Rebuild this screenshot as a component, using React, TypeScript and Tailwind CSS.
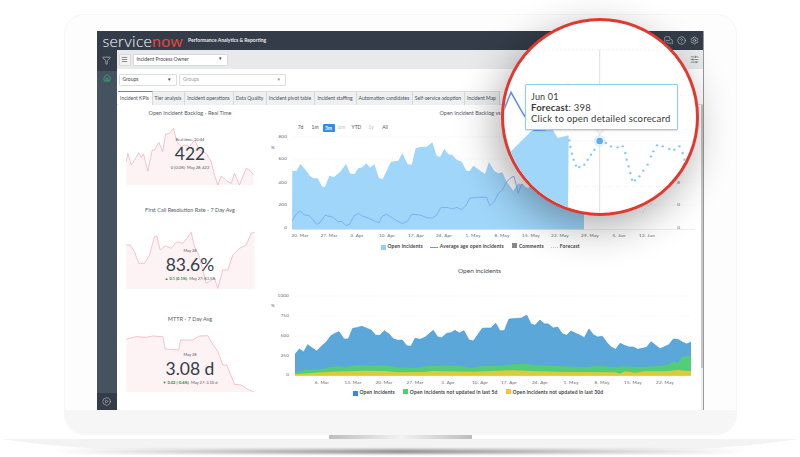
import { CirclePlay, CircleHelp, Home, MessagesSquare, Settings, SlidersHorizontal, Menu, Filter } from "lucide-react";

type Pt = [number, number];
const pts = (a: Pt[], ox: number, oy: number) => a.map(([x, y]) => `${(x / 3 + ox).toFixed(1)},${(y / 3 + oy).toFixed(1)}`);

const area1: Pt[] = [[82,183],[95,182],[106,162],[118,175],[135,198],[145,205],[158,205],[172,230],[180,231],[193,197],[207,201],[225,186],[243,162],[256,191],[268,192],[280,175],[292,172],[304,160],[316,173],[328,162],[342,205],[353,207],[378,155],[400,152],[412,130],[428,163],[440,164],[452,115],[465,111],[485,110],[502,97],[515,137],[525,141],[538,117],[550,133],[562,135],[576,150],[590,155],[604,182],[614,183],[625,167],[640,178],[660,192],[672,156],[688,183],[700,190],[712,187],[725,215],[745,242],[760,220],[790,235],[840,180],[957,140]];
const line1: Pt[] = [[82,332],[95,310],[106,303],[118,315],[132,316],[145,330],[155,343],[165,338],[180,316],[205,322],[218,335],[230,334],[243,347],[254,342],[268,317],[280,310],[292,318],[310,324],[328,333],[342,338],[352,318],[365,313],[390,329],[412,341],[428,333],[440,313],[465,315],[485,323],[502,324],[515,315],[528,292],[550,293],[562,297],[576,292],[590,299],[604,285],[614,264],[640,262],[665,262],[674,287],[688,275],[700,250],[712,240],[725,215],[738,203],[747,199],[760,250],[770,222],[778,228]];
const blue2: Pt[] = [[90,283],[103,267],[116,276],[128,254],[143,265],[155,273],[170,258],[183,247],[197,228],[210,220],[222,215],[237,237],[250,237],[263,205],[275,203],[290,199],[305,205],[318,210],[332,226],[345,226],[358,212],[372,222],[385,236],[398,241],[412,240],[425,257],[438,259],[450,235],[465,238],[480,232],[505,211],[518,231],[530,233],[545,220],[558,218],[570,211],[583,219],[597,212],[612,240],[625,243],[640,222],[652,205],[665,204],[678,204],[692,190],[705,212],[718,212],[732,177],[745,176],[770,174],[785,165],[798,192],[810,196],[825,180],[838,191],[850,192],[865,204],[878,201],[892,221],[905,226],[918,213],[932,220],[945,226],[958,233],[972,207],[985,224],[998,231],[1012,229],[1025,247],[1038,261],[1052,268],[1065,250],[1078,256],[1092,261],[1105,261],[1118,268],[1132,265],[1145,262],[1158,245],[1172,256],[1185,266],[1198,260],[1212,254],[1225,237],[1238,238],[1252,246],[1265,252],[1278,246]];
const green2: Pt[] = [[90,336],[110,333],[125,328],[150,328],[170,328],[190,322],[220,318],[240,322],[260,317],[290,315],[320,317],[360,316],[400,322],[440,324],[490,318],[540,317],[580,317],[620,323],[650,318],[700,317],[750,313],[780,311],[810,316],[860,317],[900,319],[950,322],[1000,318],[1050,322],[1070,319],[1100,320],[1130,321],[1170,319],[1205,316],[1225,304],[1240,308],[1250,290],[1278,288]];
const yellow2: Pt[] = [[90,343],[150,338],[200,335],[300,332],[360,333],[400,337],[480,336],[500,333],[620,335],[740,331],[800,333],[900,336],[1050,337],[1065,341],[1080,334],[1110,338],[1140,334],[1200,334],[1240,330],[1260,332],[1278,333]];

const spark1: Pt[] = [[80,185],[85,160],[95,195],[105,180],[118,158],[125,172],[132,162],[145,213],[158,150],[165,150],[178,127],[190,155],[198,103],[210,100],[222,85],[232,125],[245,140],[255,135],[270,140],[285,120],[300,150],[320,160],[335,185],[345,225],[355,255],[365,228],[385,245],[395,250],[405,220],[420,255],[440,205],[450,210],[462,225]];
const spark2: Pt[] = [[80,435],[92,435],[105,455],[118,490],[135,490],[150,465],[165,410],[172,408],[182,450],[198,437],[215,445],[232,425],[250,430],[262,415],[275,397],[285,440],[300,470],[310,510],[320,550],[345,535],[355,565],[370,510],[385,510],[400,465],[420,445],[440,435],[455,400],[465,397]];
const spark3: Pt[] = [[80,268],[110,260],[140,262],[160,258],[190,260],[197,297],[238,300],[243,270],[280,270],[300,258],[325,257],[335,275],[355,305],[370,345],[382,345],[405,403],[425,405],[445,418],[465,427]];

const forecast: Pt[] = [[300,392],[303,412],[308,432],[313,450],[320,468],[330,472],[345,465],[355,450],[365,435],[375,420],[385,405],[410,400],[425,410],[445,413],[460,410],[468,430],[472,450],[478,470],[483,490],[488,510],[497,512],[510,500],[522,483],[535,465],[545,440],[552,425],[563,407],[580,410],[600,418],[615,420],[630,410],[640,430],[645,450]];

const tabs = [
  { t: "Incident KPIs", c: "w-[35px] bg-white border-t border-t-[#4a90d9] border-b-white" },
  { t: "Tier analysis", c: "w-[32px]" },
  { t: "Incident operations", c: "w-[49px]" },
  { t: "Data Quality", c: "w-[33px]" },
  { t: "Incident pivot table", c: "w-[48px]" },
  { t: "Incident staffing", c: "w-[42px]" },
  { t: "Automation candidates", c: "w-[56px]" },
  { t: "Self-service adoption", c: "w-[52px]" },
  { t: "Incident Map", c: "w-[35px]" },
];

function Spark({ data, oy, y0, y1 }: { data: Pt[]; oy: number; y0: number; y1: number }) {
  const p = pts(data, 100, oy);
  const last = data[data.length - 1];
  const area = `126.7,${y1} ${p.join(" ")} ${(last[0] / 3 + 100).toFixed(1)},${y1}`;
  return (
    <svg width="129" height={y1 - y0} viewBox={`126.5 ${y0} 129 ${y1 - y0}`} className="block">
      <polygon points={area} fill="#fdf3f5" />
      <polyline points={p.join(" ")} fill="none" stroke="#efabba" strokeWidth="0.7" />
    </svg>
  );
}

function Kpi({ title, children, className }: { title: string; children: React.ReactNode; className: string }) {
  return (
    <div className={className}>
      <div className="h-[10px] text-center text-[5.5px] leading-[10px] text-[#555b64] whitespace-nowrap">{title}</div>
      {children}
    </div>
  );
}

function Swatch({ c }: { c: string }) {
  return <span className={`inline-block h-[5px] w-[5px] ${c}`} />;
}

const ax = "#666";

export default function App() {
  return (
    <div className="relative h-[457px] w-[800px] overflow-hidden bg-white font-[Lato]">
      <div className="flex flex-col items-center pt-[14px]">
        {/* laptop lid */}
        <div className="flex h-[421px] w-[673px] flex-col rounded-[20px] border border-[#f6f6f6] bg-[#fdfdfd]">
          <div className="mx-auto mt-[16px] flex h-[379px] w-[607px] flex-col overflow-hidden border-r border-r-[#999] bg-white">
            {/* header */}
            <div className="flex h-[19px] shrink-0 items-center bg-[#333c48] pl-[6px] pr-[4px]">
              <span className="text-[16px] font-light leading-none text-white tracking-[0.2px]">service</span>
              <span className="text-[16px] leading-none text-[#e2483d] tracking-[0.2px]">now</span>
              <span className="ml-[5px] text-[5px] font-bold text-[#e8ebee]">Performance Analytics &amp; Reporting</span>
              <div className="ml-auto flex items-center gap-[4px] text-[#dfe3e7]">
                <MessagesSquare size={9} strokeWidth={1.4} />
                <CircleHelp size={9} strokeWidth={1.4} />
                <Settings size={9} strokeWidth={1.4} />
              </div>
            </div>
            <div className="flex flex-1">
              {/* sidebar */}
              <div className="flex w-[20px] shrink-0 flex-col bg-[#44535f]">
                <div className="flex h-[21px] items-center justify-center bg-[#333c48] text-[#e6e9ec]">
                  <Filter size={9} strokeWidth={1.4} />
                </div>
                <div className="flex h-[13px] items-center justify-center text-[#3cc47c]">
                  <Home size={8} strokeWidth={1.8} />
                </div>
                <div className="mt-auto flex h-[17px] items-center justify-center bg-[#333c48] text-[#dfe3e7]">
                  <CirclePlay size={9} strokeWidth={1.2} />
                </div>
              </div>
              {/* content */}
              <div className="flex min-w-0 flex-1 flex-col">
                <div className="flex h-[19px] items-center gap-[2px] bg-[#e8e9eb] pl-[2px] pr-[4px]">
                  <div className="flex h-[12px] w-[12px] items-center justify-center rounded-[1px] border border-[#d9d9d9] bg-[#f3f3f3] text-[#444]">
                    <Menu size={7} strokeWidth={2} />
                  </div>
                  <div className="flex h-[12px] w-[95px] items-center justify-between rounded-[1px] border border-[#d9d9d9] bg-white px-[3px] text-[5px] text-[#444]">
                    <span>Incident Process Owner</span>
                    <span className="pr-[1px] text-[4.5px]">▼</span>
                  </div>
                  <SlidersHorizontal size={9} strokeWidth={1.3} className="ml-auto text-[#333]" />
                </div>
                <div className="flex h-[22px] items-center gap-[2.5px] pl-[2px]">
                  <div className="flex h-[12px] w-[58px] items-center justify-between rounded-[1px] border border-[#ddd] bg-white px-[3px] text-[5px] text-[#444]">
                    <span>Groups</span>
                    <span className="pr-[1px] text-[4.5px]">▼</span>
                  </div>
                  <div className="flex h-[12px] w-[107px] items-center justify-between rounded-[1px] border border-[#ddd] bg-white px-[3px] text-[5px] text-[#999]">
                    <span>Groups</span>
                    <span className="pr-[1px] text-[4.5px]">▼</span>
                  </div>
                </div>
                <div className="flex h-[14px] shrink-0 border-b border-b-[#ddd] pl-[1px]">
                  {tabs.map((x) => (
                    <div
                      key={x.t}
                      className={`flex h-[14px] items-center justify-center whitespace-nowrap border-r border-r-[#d8d8d8] text-[5px] text-[#4a4f57] ${x.c.includes("bg-white") ? "" : "border-t border-t-[#ddd] bg-[#eef0f1]"} ${x.c}`}
                    >
                      {x.t}
                    </div>
                  ))}
                </div>
                {/* body */}
                <div className="flex flex-1">
                  {/* left KPI column */}
                  <div className="w-[153px] shrink-0 pl-[9px] pt-[3px]">
                    <div className="w-[129px]">
                      <Kpi title="Open Incident Backlog - Real Time" className="">
                        <div className="relative mt-[6px]">
                          <Spark data={spark1} oy={100} y0={124} y1={185} />
                          <div className="absolute inset-x-0 top-[13px] flex flex-col items-center text-[#333c48]">
                            <span className="text-[4px] leading-[5px] text-[#555]">Real time: 10:44</span>
                            <span className="text-[17.5px] leading-[23px]">422</span>
                            <span className="text-[4px] leading-[5px] text-[#555]">0 (0.0%) &nbsp;May 28: 422</span>
                          </div>
                        </div>
                      </Kpi>
                      <Kpi title="First Call Resolution Rate - 7 Day Avg" className="mt-[20px]">
                        <div className="relative mt-[7px]">
                          <Spark data={spark2} oy={100} y0={222} y1={289} />
                          <div className="absolute inset-x-0 top-[26px] flex flex-col items-center text-[#333c48]">
                            <span className="text-[4px] leading-[5px] text-[#555]">May 28</span>
                            <span className="text-[17.5px] leading-[23px]">83.6%</span>
                            <span className="text-[4px] leading-[5px] text-[#555]"><span className="font-bold text-[#2c8a3c]">▲ 0.1 (0.1%)</span> &nbsp;May 27: 83.5%</span>
                          </div>
                        </div>
                      </Kpi>
                      <Kpi title="MTTR - 7 Day Avg" className="mt-[25px]">
                        <div className="relative mt-[6px]">
                          <Spark data={spark3} oy={250} y0={330} y1={392} />
                          <div className="absolute inset-x-0 top-[22px] flex flex-col items-center text-[#333c48]">
                            <span className="text-[4px] leading-[5px] text-[#555]">May 28</span>
                            <span className="text-[17.5px] leading-[23px]">3.08 d</span>
                            <span className="text-[4px] leading-[5px] text-[#555]"><span className="font-bold text-[#2c8a3c]">▼ 0.02 (-0.6%)</span> &nbsp;May 27: 3.10 d</span>
                          </div>
                        </div>
                      </Kpi>
                    </div>
                  </div>
                  {/* right charts column */}
                  <div className="flex min-w-0 flex-1 flex-col pt-[3px]">
                    <div className="h-[10px] pr-[8px] text-center text-[5.5px] leading-[10px] text-[#555b64] whitespace-nowrap">Open Incident Backlog vs Forecast</div>
                    <div className="ml-[24px] mt-[5px] flex h-[10px] items-center text-[5px] text-[#555]">
                      <span className="w-[14px] text-center">7d</span>
                      <span className="w-[15px] text-center">1m</span>
                      <span className="h-[8px] w-[12px] rounded-[1px] bg-[#2d8ef0] text-center font-bold leading-[8px] text-white">3m</span>
                      <span className="w-[14px] text-center text-[#bbb]">6m</span>
                      <span className="w-[16px] text-center">YTD</span>
                      <span className="w-[13px] text-center text-[#bbb]">1y</span>
                      <span className="w-[15px] text-center">All</span>
                    </div>
                    <svg width="431" height="108" viewBox="270 133 431 108" className="block shrink-0">
                      {[137, 159, 182, 205].map((y) => (
                        <line key={y} x1="292" x2="695" y1={y} y2={y} stroke="#e6e6e6" strokeWidth="0.5" strokeDasharray="1 1.5" />
                      ))}
                      <polygon points={`292,229.5 ${pts(area1, 265, 110).join(" ")} 584,182 584,229.5`} fill="#9fd6fa" />
                      <polyline points={pts(line1, 265, 110).join(" ")} fill="none" stroke="#7ba4ee" strokeWidth="0.8" />
                      <line x1="292" x2="695" y1="229.5" y2="229.5" stroke="#ddd" strokeWidth="0.5" />
                      {[[643,212],[645,209],[648,206],[651,204]].map(([x, y]) => (
                        <circle key={x} cx={x} cy={y} r="0.6" fill="#9fd0f5" />
                      ))}
                      <g fontSize="4.6" fill={ax} fontFamily="Lato" textAnchor="end" letterSpacing="0.2">
                        <text x="287" y="138">800</text>
                        <text x="287" y="160">600</text>
                        <text x="287" y="184">400</text>
                        <text x="287" y="206">200</text>
                        <text x="287" y="229">0</text>
                        <text x="275" y="148.5">%</text>
                        <text x="680" y="184">8</text>
                        <text x="680" y="206">0</text>
                        <text x="680" y="229">0</text>
                      </g>
                      <g fontSize="4.6" fill={ax} fontFamily="Lato" textAnchor="middle" letterSpacing="0.2">
                        {[["20. Mar",300],["27. Mar",329],["3. Apr",357],["10. Apr",387],["17. Apr",416],["24. Apr",444],["1. May",473],["8. May",502],["15. May",531],["22. May",560],["29. May",590],["5. Jun",619],["12. Jun",647]].map(([t, x]) => (
                          <text key={t} x={x} y="237">{t}</text>
                        ))}
                      </g>
                    </svg>
                    <div className="mt-[2px] flex h-[8px] items-center pl-[111px] text-[5px] font-bold tracking-[0.12px] text-[#444]">
                      <Swatch c="bg-[#8fd0fa]" />
                      <span className="ml-[2px]">Open incidents</span>
                      <span className="ml-[7px] h-px w-[8px] bg-[#6e97e6]" />
                      <span className="ml-[2px]">Average age open incidents</span>
                      <span className="ml-[8px]"><Swatch c="bg-[#888]" /></span>
                      <span className="ml-[2px]">Comments</span>
                      <span className="ml-[7px] w-[7px] border-t border-dotted border-t-[#9fd0f5]" />
                      <span className="ml-[2px]">Forecast</span>
                    </div>
                    <div className="mt-[15px] h-[10px] pr-[11px] text-center text-[6.5px] leading-[10px] text-[#444b55]">Open incidents</div>
                    <svg width="431" height="108" viewBox="270 280 431 108" className="mt-[4px] block shrink-0">
                      {[296, 316, 336, 356].map((y) => (
                        <line key={y} x1="295" x2="691" y1={y} y2={y} stroke="#e6e6e6" strokeWidth="0.5" strokeDasharray="1 1.5" />
                      ))}
                      <polygon points={`295,376 ${pts(blue2, 265, 260).join(" ")} 691,376`} fill="#5ca7da" />
                      <polyline points={pts(blue2, 265, 260).join(" ")} fill="none" stroke="#3f93d6" strokeWidth="0.6" />
                      <polygon points={`295,376 ${pts(green2, 265, 260).join(" ")} 691,376`} fill="#53cd78" />
                      <polygon points={`295,376 ${pts(yellow2, 265, 260).join(" ")} 691,376`} fill="#dccb38" />
                      <line x1="295" x2="691" y1="376" y2="376" stroke="#ddd" strokeWidth="0.5" />
                      <g fontSize="4.6" fill={ax} fontFamily="Lato" textAnchor="end" letterSpacing="0.2">
                        <text x="289" y="296.5">1000</text>
                        <text x="289" y="316.5">750</text>
                        <text x="289" y="336.5">500</text>
                        <text x="289" y="356.5">250</text>
                        <text x="289" y="375.5">0</text>
                        <text x="275" y="307">%</text>
                      </g>
                      <g fontSize="4.6" fill={ax} fontFamily="Lato" textAnchor="middle" letterSpacing="0.2">
                        {[["6. Mar",322],["13. Mar",353],["20. Mar",384],["27. Mar",415],["3. Apr",448],["10. Apr",480],["17. Apr",509],["24. Apr",540],["1. May",571],["8. May",602],["15. May",633],["22. May",665]].map(([t, x]) => (
                          <text key={t} x={x} y="384">{t}</text>
                        ))}
                      </g>
                    </svg>
                    <div className="mt-[1px] flex h-[8px] items-center pl-[83px] text-[5px] font-bold tracking-[0.12px] text-[#444]">
                      <Swatch c="bg-[#2f8fd6]" />
                      <span className="ml-[2px]">Open incidents</span>
                      <span className="ml-[8px]"><Swatch c="bg-[#4fd070]" /></span>
                      <span className="ml-[2px]">Open incidents not updated in last 5d</span>
                      <span className="ml-[8px]"><Swatch c="bg-[#f7c820]" /></span>
                      <span className="ml-[2px]">Open incidents not updated in last 30d</span>
                    </div>
                  </div>
                  {/* scrollbar */}
                  <div className="flex w-[2px] shrink-0 flex-col bg-[#eeeeee]">
                    <div className="h-[263px] bg-[#c6c6c6]" />
                  </div>
                </div>
              </div>
            </div>
          </div>
          <div className="flex-1 rounded-b-[20px] bg-[#f6f6f6]" />
        </div>
        {/* hinge notch */}
        <div className="h-[4px] w-[143px] shrink-0 bg-gradient-to-r from-[#bdbdbd] via-[#f2f2f2] to-[#bdbdbd]" />
        {/* base */}
        <svg width="800" height="11" viewBox="0 0 800 11" className="block shrink-0">
          <path d="M0 0 H800 C770 4 745 7 700 10 H100 C55 7 30 4 0 0 Z" fill="#f3f3f3" />
        </svg>
        <div className="-mt-[1px] h-[5px] w-[696px] shrink-0 bg-gradient-to-r from-[#ffffff] via-[#8d8d8d] to-[#ffffff] opacity-90 blur-[1px]" />
      </div>

      {/* magnifier */}
      <div className="absolute left-[501px] top-[18px] h-[198px] w-[198px] overflow-hidden rounded-full border-[3px] border-[#e03a30] bg-white shadow-[-6px_12px_40px_rgba(0,0,0,0.32)]">
        <svg viewBox="104 34 576 576" className="block h-full w-full">
          {[120, 257, 394, 530].map((y) => (
            <line key={y} x1="104" x2="680" y1={y} y2={y} stroke="#d9d9d9" strokeWidth="1.5" strokeDasharray="3 5" />
          ))}
          <line x1="391" x2="391" y1="120" y2="610" stroke="#cfcfcf" strokeWidth="2" />
          <polygon points="104,445 120,430 185,365 215,340 235,335 265,385 298,377 296,610 104,610" fill="#9fd6fa" />
          <polyline points="215,245 260,235 298,222" fill="none" stroke="#b9ddf6" strokeWidth="2" />
          <polyline points="104,300 125,248 160,310 195,362 230,360" fill="none" stroke="#5a8fe8" strokeWidth="4.5" />
          <polyline points="104,525 130,498 145,550 160,515 180,520" fill="none" stroke="#5a8fe8" strokeWidth="2.5" />
          {forecast.map(([x, y]) => (
            <circle key={`${x}-${y}`} cx={x} cy={y} r="3.6" fill="#86c9f7" />
          ))}
          <circle cx="391" cy="394" r="16" fill="#eaf5fd" stroke="#cfe6f8" strokeWidth="2" />
          <circle cx="391" cy="394" r="10" fill="#58aff5" />
          <polygon points="377,358 405,358 391,374" fill="#f5f8fb" stroke="#b8d9f2" strokeWidth="1.5" />
        </svg>
        <div className="absolute left-[21px] top-[63px] h-[46px] w-[153px] rounded-[1px] border border-[#92cdf3] bg-white/90 pl-[5px] pt-[6px] text-[9.5px] leading-[11px] tracking-[0.2px] text-[#3a3a3a] shadow-[0_1px_2px_rgba(0,0,0,0.15)]">
          <div className="text-[9px]">Jun 01</div>
          <div><span className="font-bold">Forecast</span>: 398</div>
          <div className="whitespace-nowrap">Click to open detailed scorecard</div>
        </div>
      </div>
    </div>
  );
}
